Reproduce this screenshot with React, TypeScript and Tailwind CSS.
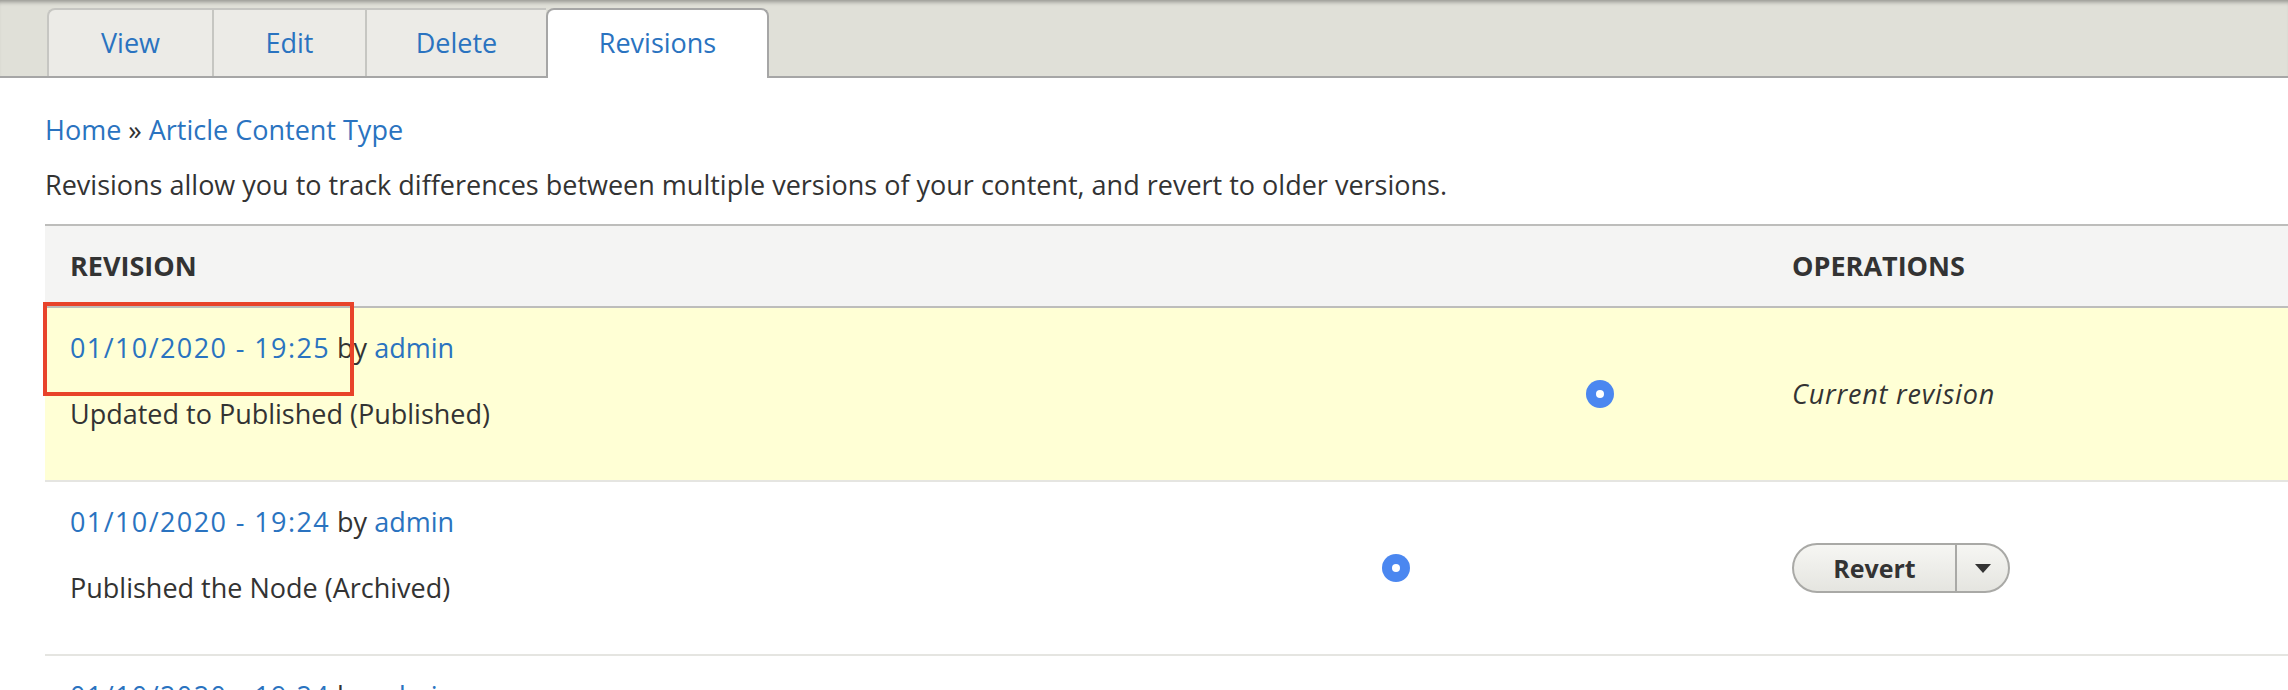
import React from "react";

type Revision = {
  id: number;
  date: string;
  author: string;
  message: string;
  current: boolean;
  // distance of the status dot from the operations column
  dotGap: string;
};

const tabs = [
  { label: "View", width: "w-[165px]" },
  { label: "Edit", width: "w-[153px]" },
  { label: "Delete", width: "w-[181px]" },
  { label: "Revisions", width: "w-[223px]", active: true },
];

const revisions: Revision[] = [
  {
    id: 3,
    date: "01/10/2020 - 19:25",
    author: "admin",
    message: "Updated to Published (Published)",
    current: true,
    dotGap: "mr-[153px]",
  },
  {
    id: 2,
    date: "01/10/2020 - 19:24",
    author: "admin",
    message: "Published the Node (Archived)",
    current: false,
    dotGap: "mr-[357px]",
  },
  {
    id: 1,
    date: "01/10/2020 - 19:24",
    author: "admin",
    message: "Created the Node (Draft)",
    current: false,
    dotGap: "mr-[357px]",
  },
];

function StatusDot() {
  return (
    <span className="flex h-[28px] w-[28px] shrink-0 items-center justify-center rounded-full bg-[#4b87f0]">
      <span className="h-[8px] w-[8px] rounded-full bg-white" />
    </span>
  );
}

function RevertButton() {
  return (
    <div className="flex h-[50px] w-[218px] items-stretch overflow-hidden rounded-full border-2 border-[#a9a9a6] bg-gradient-to-b from-[#f6f6f3] to-[#e5e5e0]">
      <button
        type="button"
        className="flex flex-1 items-center justify-center text-[25px] font-bold text-[#333]"
      >
        Revert
      </button>
      <button
        type="button"
        className="flex w-[53px] items-center justify-center border-l-2 border-[#a9a9a6]"
      >
        <svg width="16" height="9" viewBox="0 0 16 9">
          <path d="M0 0 L16 0 L8 9 Z" fill="#333" />
        </svg>
      </button>
    </div>
  );
}

export default function App() {
  return (
    <div
      className="relative min-h-screen w-full bg-white text-[27px] leading-[36px] text-[#333]"
      style={{ fontFamily: '"Open Sans", "DejaVu Sans", sans-serif' }}
    >
      {/* local task tabs */}
      <div className="h-[78px] border-b-2 border-[#a6a6a6] bg-[#e0e0d8] shadow-[inset_0_5px_4px_-3px_rgba(0,0,0,0.35)]">
        <ul className="flex h-full items-end pl-[47px]">
          {tabs.map((tab, i) =>
            tab.active ? (
              <li
                key={tab.label}
                className={`relative -mb-[2px] flex h-[70px] items-center justify-center rounded-t-[8px] border-2 border-b-0 border-[#a6a6a6] bg-white pb-[2px] ${tab.width}`}
              >
                <a className="text-[#2a73c0]">{tab.label}</a>
              </li>
            ) : (
              <li
                key={tab.label}
                className={`flex h-[68px] items-center justify-center border-t-2 border-l-2 border-[#c6c6c2] bg-[#ecebe7] ${
                  i === 0 ? "rounded-tl-[8px]" : ""
                } ${tab.width}`}
              >
                <a className="text-[#2a73c0]">{tab.label}</a>
              </li>
            )
          )}
        </ul>
      </div>

      <div className="pl-[45px]">
        <nav className="mt-[34px] text-[#2a73c0]">
          <a>Home</a>
          <span className="text-[#333]"> » </span>
          <a>Article Content Type</a>
        </nav>
        <p className="mt-[19px]">
          Revisions allow you to track differences between multiple versions
          of your content, and revert to older versions.
        </p>

        <div className="mt-[21px] border-t-2 border-[#bdbdbb]">
          <div className="grid h-[82px] grid-cols-[1722px_1fr] items-center border-b-2 border-[#bdbdbb] bg-[#f4f4f3] font-bold uppercase">
            <div className="pl-[25px]">Revision</div>
            <div className="pl-[25px]">Operations</div>
          </div>

          {revisions.map((rev) => (
            <div
              key={rev.id}
              className={`grid h-[174px] grid-cols-[1722px_1fr] border-b-2 border-[#e5e5e1] ${
                rev.current ? "bg-[#ffffd5]" : "bg-white"
              }`}
            >
              <div className="flex items-center">
                <div className="flex-1 self-start pl-[25px] pt-[22px]">
                  <div>
                    <a className="tracking-[1.4px] text-[#2a73c0]">
                      {rev.date}
                    </a>{" "}
                    by <a className="text-[#2a73c0]">{rev.author}</a>
                  </div>
                  <div className="mt-[30px]">{rev.message}</div>
                </div>
                <div className={rev.dotGap}>
                  <StatusDot />
                </div>
              </div>
              <div className="flex items-center pl-[25px]">
                {rev.current ? (
                  <em className="tracking-[0.8px]">Current revision</em>
                ) : (
                  <RevertButton />
                )}
              </div>
            </div>
          ))}
        </div>
      </div>

      {/* highlight around the latest revision date */}
      <div className="pointer-events-none absolute left-[43px] top-[302px] h-[94px] w-[311px] border-[4px] border-[#e8432a]" />
    </div>
  );
}
